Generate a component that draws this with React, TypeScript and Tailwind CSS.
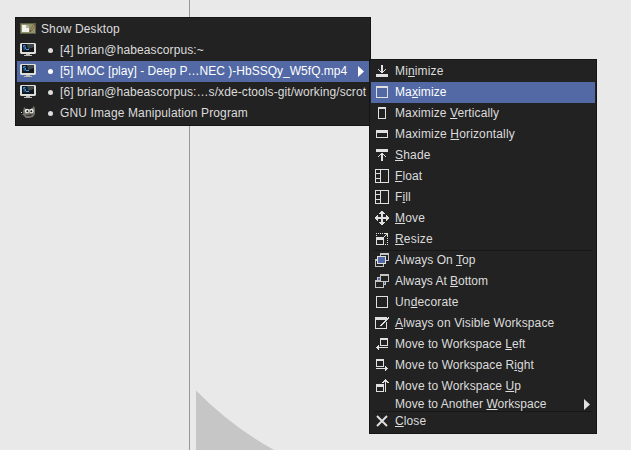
import type { ReactNode } from "react";

const L = "#e0e0e0";

function Icon({ children }: { children: ReactNode }) {
  return (
    <svg width="16" height="16" viewBox="0 0 16 16" fill={L} shapeRendering="crispEdges" className="shrink-0">
      {children}
    </svg>
  );
}

const Tiles = () => (
  <path fillRule="evenodd" d="M1 0h14v14H1zM2 1v3h4V1zM2 5v4h4V5zM2 10v3h4v-3zM7 1v12h7V1z" />
);

const icons: Record<string, ReactNode> = {
  minimize: <path d="M7 1h2v6h1v-1h1v-1h1v1h-1v1h-1v1h-1v1h-2v-1h-1v-1h-1v-1h-1v-1h1v1h1v1h1zM2 10h12v3H2z" />,
  maximize: <path fillRule="evenodd" d="M2 1h12v12H2zM3 3v9h10V3z" />,
  vertical: <path fillRule="evenodd" d="M4 1h8v12H4zM5 3v9h6V3z" />,
  horizontal: <path fillRule="evenodd" d="M2 3h12v8H2zM3 6v4h10V6z" />,
  shade: <path d="M2 1h12v3H2zM7 5h2v1h1v1h1v1h1v1h-1v-1h-1v-1h-1v6H7V7H6v1H5v1H4V8h1V7h1V6h1z" />,
  tiles: <Tiles />,
  move: (
    <path d="M7 0h2v1h1v1h1v1H9v3h3V4h1v1h1v1h1v2h-1v1h-1v1h-1V8H9v3h2v1h-1v1H9v1H7v-1H6v-1H5v-1h2V8H4v2H3V9H2V8H1V6h1V5h1V4h1v2h3V3H5V2h1V1h1z" />
  ),
  resize: (
    <path fillRule="evenodd" d="M2 1h1v1H2zM4 1h1v1H4zM6 1h1v1H6zM8 1h1v1H8zM10 1h4v4h-1V3h-1v1h-1v1h-1V4h1V3h1V2h-2zM2 3h1v1H2zM13 6h1v1h-1zM13 8h1v1h-1zM13 10h1v1h-1zM13 12h1v1h-1zM11 12h1v1h-1zM2 5h8v8H2zM3 8v4h6V8z" />
  ),
  top: (
    <>
      <path fillRule="evenodd" d="M6 0h9v8H6zM7 2v5h7V2zM1 6h9v8H1zM2 8v5h7V8z" fill="#c4c4c4" />
      <path d="M3 3h9v8H3z" />
      <path d="M4 4h7v6H4z" fill="#5269a5" />
    </>
  ),
  bottom: (
    <>
      <path d="M3 3h9v8H3z" fill="#c4c4c4" />
      <path d="M4 4h7v6H4z" fill="#5269a5" />
      <path d="M6 0h9v8H6zM1 6h9v8H1z" fill="#c4c4c4" />
      <path d="M7 2h7v5H7zM2 8h7v5H2z" fill="#222" />
    </>
  ),
  undecorate: <path fillRule="evenodd" d="M2 1h12v12H2zM3 2v10h10V2z" />,
  visible: (
    <>
      <path fillRule="evenodd" d="M1 1h12v12H1zM2 4v8h10V4z" />
      <path d="M15 1l-8 8-1 2 2-1 7-7z" stroke="#222" shapeRendering="auto" />
      <path d="M14 1h1v2h-1v1h-1v1h-1v1h-1v1h-1v1H9v1H8v1H6V9h1V8h1V7h1V6h1V5h1V4h1V3h1V2h1z" />
    </>
  ),
  left: (
    <path fillRule="evenodd" d="M6 1h8v8H6zM7 3v5h6V3zM4 8h1v2h9v1H5v2H4v-1H3v-1H2v-1h1V9h1z" />
  ),
  right: (
    <path fillRule="evenodd" d="M2 1h8v8H2zM3 3v5h6V3zM2 10h9V8h1v1h1v1h1v1h-1v1h-1v1h-1v-2H2z" />
  ),
  up: (
    <path fillRule="evenodd" d="M2 5h8v8H2zM3 8v4h6V8zM11 0h1v1h1v1h1v1h1v1h-2V3h-1v10h-1V3h-1v1H8V3h1V2h1V1h1z" />
  ),
  close: (
    <path d="M3 2l10 10M13 2L3 12" stroke={L} strokeWidth="1.9" fill="none" shapeRendering="auto" />
  ),
};

type Item = {
  icon?: string;
  text: [string, string, string];
  track: string;
  active?: boolean;
  line?: boolean;
  arrow?: boolean;
};

const items: Item[] = [
  { icon: "minimize", text: ["Mi", "n", "imize"], track: "tracking-[0.15px]" },
  { icon: "maximize", text: ["Ma", "x", "imize"], track: "tracking-[0.12px]", active: true },
  { icon: "vertical", text: ["Maximize ", "V", "ertically"], track: "tracking-[0.11px]" },
  { icon: "horizontal", text: ["Maximize ", "H", "orizontally"], track: "tracking-[0.15px]" },
  { icon: "shade", text: ["", "S", "hade"], track: "tracking-[0.2px]" },
  { icon: "tiles", text: ["", "F", "loat"], track: "tracking-[0.1px]" },
  { icon: "tiles", text: ["F", "i", "ll"], track: "tracking-[0.1px]" },
  { icon: "move", text: ["", "M", "ove"], track: "tracking-[0.15px]" },
  { icon: "resize", text: ["", "R", "esize"], track: "tracking-[0.18px]" },
  { icon: "top", text: ["Always On ", "T", "op"], track: "tracking-[0.05px]", line: true },
  { icon: "bottom", text: ["Always At ", "B", "ottom"], track: "tracking-[-0.03px]" },
  { icon: "undecorate", text: ["Un", "d", "ecorate"], track: "tracking-[0.15px]" },
  { icon: "visible", text: ["", "A", "lways on Visible Workspace"], track: "tracking-[0.11px]" },
  { icon: "left", text: ["Move to Workspace ", "L", "eft"], track: "tracking-[0.06px]" },
  { icon: "right", text: ["Move to Workspace R", "i", "ght"], track: "tracking-[0.08px]" },
  { icon: "up", text: ["Move to Workspace ", "U", "p"], track: "tracking-[0.07px]" },
  { text: ["Move to Another ", "W", "orkspace"], track: "tracking-[0.04px]", arrow: true },
  { icon: "close", text: ["", "C", "lose"], track: "tracking-[0.1px]", line: true },
];

const Arrow = ({ color }: { color: string }) => (
  <svg width="6" height="11" viewBox="0 0 6 11" className="shrink-0">
    <path d="M0 0l6 5.5L0 11z" fill={color} />
  </svg>
);

function ActionRow({ item }: { item: Item }) {
  return (
    <>
      {item.line && <div className="mx-[3px] -mb-px h-px bg-[#171717]" />}
      <div
        className={`flex pl-[3px] pr-[5px] ${item.icon ? "h-[21px]" : "h-[14px] items-center"} ${
          item.active ? "bg-[#5269a5] text-white" : ""
        }`}
      >
        <div className="w-[21px] shrink-0 pt-[3px]">{item.icon && <Icon>{icons[item.icon]}</Icon>}</div>
        <span className={`grow ${item.track} ${item.icon ? "leading-[20px]" : "leading-[14px]"}`}>
          {item.text[0]}
          <span className="underline decoration-1 underline-offset-1 [text-decoration-skip-ink:none]">{item.text[1]}</span>
          {item.text[2]}
        </span>
        {item.arrow && <Arrow color="#e0e0e0" />}
      </div>
    </>
  );
}

const DesktopIcon = () => (
  <svg width="16" height="16" viewBox="0 0 16 16" className="shrink-0">
    <path d="M0 2h16v11H0z" fill="#5f6048" />
    <path d="M1 3h14v9H1z" fill="#90916d" />
    <path d="M2 4h5l2 2v5H2z" fill="#f2f2ec" />
    <path d="M6 4h1l2 2v1H6z" fill="#b4b5a0" />
    <path d="M14 3l-3 5-1 3 2-2 3-5z" fill="#d3b47a" stroke="#4b3b20" strokeWidth=".6" />
  </svg>
);

const TerminalIcon = () => (
  <svg width="16" height="16" viewBox="0 0 16 16" className="shrink-0">
    <path d="M1 1h14l1 1v9l-1 1H1l-1-1V2z" fill="#dededa" />
    <path d="M2 2h12v8H2z" fill="#11181e" />
    <path d="M7 2h7v3L8 7z" fill="#3c464d" />
    <path d="M5.5 3.5h-2v1.500h2v2h-2" stroke="#3e8ee0" fill="none" />
    <path d="M6 7h3v1H6z" fill="#4f9ce8" />
    <path d="M6 12h4v1h2v1H4v-1h2z" fill="#bcbcb8" />
  </svg>
);

const GimpIcon = () => (
  <svg width="16" height="16" viewBox="0 0 16 16" className="shrink-0">
    <path d="M4 2l2 2h5l3-3 1 3v5l-2 3-4 1H6l-3-3-2-1V7h2z" fill="#77736a" />
    <circle cx="7" cy="6" r="2.200" fill="#f0f0ec" />
    <circle cx="11.500" cy="6" r="2.200" fill="#f0f0ec" />
    <circle cx="7.400" cy="6.200" r="1" fill="#111" />
    <circle cx="11.300" cy="6.200" r="1" fill="#111" />
    <path d="M5 10l8-1-2 2H7z" fill="#3a3833" />
    <circle cx="2" cy="8" r="1.300" fill="#1a1a1a" />
    <path d="M1 7h1v1H1z" fill="#ddd" />
  </svg>
);

type Win = { icon: ReactNode; text: string; track: string; bullet?: boolean; active?: boolean };

const windows: Win[] = [
  { icon: <DesktopIcon />, text: "Show Desktop", track: "tracking-[0.12px]" },
  { icon: <TerminalIcon />, text: "[4] brian@habeascorpus:~", track: "tracking-[0.11px]", bullet: true },
  {
    icon: <TerminalIcon />,
    text: "[5] MOC [play] - Deep P…NEC )-HbSSQy_W5fQ.mp4",
    track: "tracking-[0.01px]",
    bullet: true,
    active: true,
  },
  {
    icon: <TerminalIcon />,
    text: "[6] brian@habeascorpus:…s/xde-ctools-git/working/scrot",
    track: "tracking-[0.095px]",
    bullet: true,
  },
  { icon: <GimpIcon />, text: "GNU Image Manipulation Program", track: "tracking-[0.13px]", bullet: true },
];

export default function App() {
  return (
    <div className="relative h-[450px] w-[631px] overflow-hidden bg-[#e9e9e9] font-['Liberation_Sans',Arial,sans-serif] text-[12px] whitespace-pre text-[#dcdcdc]">
      <div className="absolute top-0 left-[189px] h-full w-px bg-[#999]" />
      <svg className="absolute top-[390px] left-[196px]" width="80" height="60" viewBox="0 0 80 60">
        <path d="M0 .5Q36 37 78 60H0z" fill="#c6c6c6" />
      </svg>

      <div className="absolute top-[17px] left-[15px] w-[356px] border border-[#151515] bg-[#222] p-px">
        {windows.map((w) => (
          <div key={w.text} className={`flex h-[21px] pl-[3px] ${w.active ? "bg-[#5269a5] text-white" : ""}`}>
            <span className="shrink-0 pt-[2px]">{w.icon}</span>
            {w.bullet && <span className="mt-2 ml-3 h-[5px] w-[5px] shrink-0 rounded-full bg-current" />}
            <span className={`grow leading-[20px] ${w.track} ${w.bullet ? "ml-[7px]" : "ml-[5px]"}`}>{w.text}</span>
            {w.active && (
              <span className="mt-[5px] mr-[5px]">
                <Arrow color="#fff" />
              </span>
            )}
          </div>
        ))}
      </div>

      <div className="absolute top-[59px] left-[369px] w-[228px] border border-[#151515] bg-[#222] p-px">
        {items.map((item) => (
          <ActionRow key={item.text.join("")} item={item} />
        ))}
      </div>
    </div>
  );
}
